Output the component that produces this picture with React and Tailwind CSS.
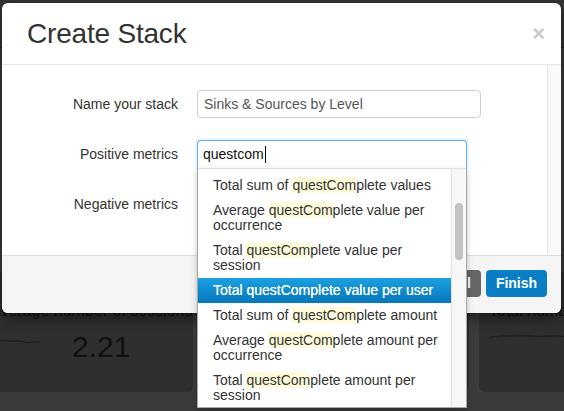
import React from 'react';

const font = { fontFamily: '"Liberation Sans", Arial, sans-serif' };

const items = [
  { pre: 'Total sum of ', post: 'plete values' },
  { pre: 'Average ', post: 'plete value per occurrence' },
  { pre: 'Total ', post: 'plete value per session' },
  { active: true, text: 'Total questComplete value per user' },
  { pre: 'Total sum of ', post: 'plete amount' },
  { pre: 'Average ', post: 'plete amount per occurrence' },
  { pre: 'Total ', post: 'plete amount per session' },
];

function Sparkline({ className }) {
  return (
    <svg className={className} viewBox="0 0 80 8" preserveAspectRatio="none">
      <path d="M0 5 C10 4 18 3 28 4 S45 3 55 5 S70 4 80 5" fill="none" stroke="#1c1c1c" strokeWidth="1.2" />
    </svg>
  );
}

function Backdrop() {
  return (
    <div className="w-[564px] h-[411px] bg-[#3b3b3b] flex flex-col overflow-hidden">
      <div className="h-[48px] shrink-0 bg-[#353535] border-b border-[#222]" />
      <div className="flex-1 flex flex-col justify-end pb-[19px]">
        <div className="flex gap-[10px] -ml-[10px] h-[120px]">
          <div className="w-[203px] shrink-0 bg-[#2f2f2f] rounded-md flex flex-col pt-[30px] overflow-hidden">
            <div className="text-[16px] leading-[18px] text-[#111] whitespace-nowrap text-right pr-[58px]">Average number of sessions per user</div>
            <div className="flex items-center mt-[12px]">
              <Sparkline className="w-[50px] h-[8px] mt-[-12px]" />
              <span className="ml-[32px] text-[30px] leading-none text-[#111]">2.21</span>
            </div>
          </div>
          <div className="w-[266px] shrink-0 bg-[#2f2f2f] rounded-md" />
          <div className="w-[200px] shrink-0 bg-[#2f2f2f] rounded-md flex flex-col pt-[30px] pl-[10px] overflow-hidden">
            <div className="text-[16px] leading-[18px] text-[#111] whitespace-nowrap">Total number of sessions</div>
            <Sparkline className="w-[120px] h-[8px] mt-[12px]" />
          </div>
        </div>
      </div>
    </div>
  );
}

function Dropdown() {
  return (
    <div className="absolute left-0 top-full w-[270px] h-[240px] bg-white border border-t-0 border-[#a8a8a8] shadow-[0_3px_6px_rgba(0,0,0,0.25)] flex overflow-hidden">
      <div className="flex-1 pt-[4px] border-t border-[#dcdcdc]">
        {items.map((it, i) =>
          it.active ? (
            <div key={i} className="px-[15px] py-[5px] leading-[15px] text-white bg-gradient-to-b from-[#1ba1e2] to-[#0577ba] [text-shadow:0_0_0.5px_#fff]">
              {it.text}
            </div>
          ) : (
            <div key={i} className="pl-[15px] pr-[3px] py-[5px] leading-[15px] text-[#333]">
              {it.pre}
              <span className="bg-[#fefbdb]">questCom</span>
              {it.post}
            </div>
          )
        )}
      </div>
      <div className="w-[15px] shrink-0 bg-[#f7f7f7] border-l border-t border-[#e2e2e2] pt-[34px] flex justify-center">
        <div className="w-[8px] h-[57px] rounded-full bg-[#c2c2c2]" />
      </div>
    </div>
  );
}

function Modal() {
  return (
    <div className="absolute left-[2px] top-[3px] w-[559px] h-[310px] bg-white rounded-md shadow-[0_4px_14px_rgba(0,0,0,0.5)] flex flex-col">
      <div className="h-[62px] shrink-0 border-b border-[#e5e5e5] flex items-center justify-between pl-[25px] pr-[16px]">
        <h1 className="text-[28px] text-[#333] leading-none tracking-[-0.2px]">Create Stack</h1>
        <span className="text-[22px] font-bold text-[#c9c9c9] leading-none">×</span>
      </div>
      <div className="flex-1 flex">
        <div className="flex-1 pt-[25px] flex flex-col gap-[22px] text-[14px]">
          <div className="flex items-center h-[28px] gap-[19px]">
            <label className="w-[176px] text-right text-[#333]">Name your stack</label>
            <div className="w-[284px] h-[28px] border border-[#cfcfcf] rounded-[4px] flex items-center px-[6px] text-[#555]">
              Sinks &amp; Sources by Level
            </div>
          </div>
          <div className="flex items-center h-[28px] gap-[19px] relative z-10">
            <label className="w-[176px] text-right text-[#333]">Positive metrics</label>
            <div className="relative">
              <div className="w-[270px] h-[28px] border border-b-0 border-[#66afe9] rounded-t-[4px] flex items-center px-[5px] text-[#111] shadow-[0_0_4px_rgba(102,175,233,0.4)]">
                questcom
                <span className="inline-block w-px h-[17px] bg-black ml-[1px]" />
              </div>
              <Dropdown />
            </div>
          </div>
          <div className="flex items-center h-[28px] gap-[19px]">
            <label className="w-[176px] text-right text-[#333]">Negative metrics</label>
          </div>
        </div>
        <div className="w-[14px] shrink-0 bg-[#fafafa] border-l border-[#e6e6e6]" />
      </div>
      <div className="h-[58px] shrink-0 bg-[#f5f5f5] border-t border-[#dedede] rounded-b-md flex justify-end items-start gap-[5px] pt-[14px] pr-[14px]">
        <button className="w-[66px] h-[27px] rounded-[4px] bg-[#666] text-white font-bold text-[14px]">Cancel</button>
        <button className="w-[61px] h-[27px] rounded-[4px] bg-[#0a7ec4] text-white font-bold text-[14px]">Finish</button>
      </div>
    </div>
  );
}

export default function App() {
  return (
    <div className="relative w-[564px] h-[411px] overflow-hidden" style={font}>
      <Backdrop />
      <Modal />
    </div>
  );
}
